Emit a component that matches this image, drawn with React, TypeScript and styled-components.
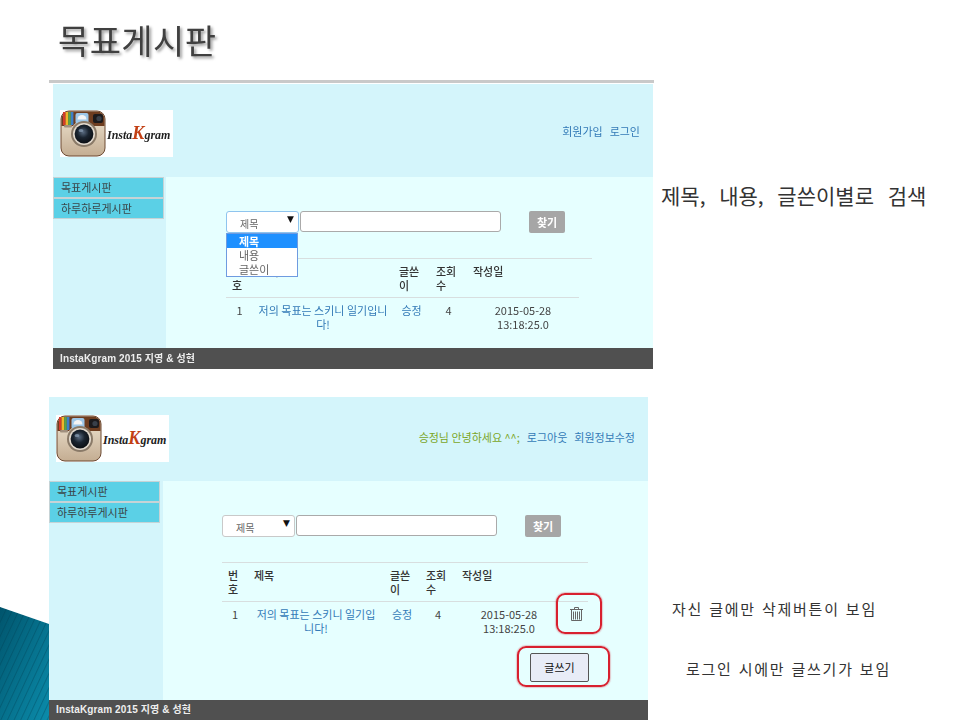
import React from "react";
import styled, { createGlobalStyle } from "styled-components";

const Global = createGlobalStyle`
  html, body { margin: 0; padding: 0; background: #fff; }
  body { width: 960px; height: 720px; overflow: hidden; font-family: "Noto Sans CJK KR", "Liberation Sans", sans-serif; }
`;

const Slide = styled.div`
  position: relative;
  width: 960px;
  height: 720px;
  overflow: hidden;
  background: #fff;
  display: flex;
  flex-direction: column;
`;
const Corner = styled.svg`
  position: absolute;
  left: 0;
  bottom: 0;
`;
const TitleBar = styled.h1`
  margin: 0;
  height: 80px;
  box-sizing: border-box;
  padding: 15px 0 0 58px;
  font-size: 34px;
  letter-spacing: 0.4px;
  line-height: 50px;
  font-weight: 400;
  color: #404040;
  text-shadow: 2px 2px 3px rgba(0, 0, 0, 0.4);
  filter: blur(0.3px);
`;
const Rule = styled.div`
  height: 3px;
  width: 605px;
  margin-left: 49px;
  background: #c9c9c9;
  flex: none;
`;
const Row = styled.section<{ $left: number; $top: number }>`
  display: flex;
  margin: ${(p) => p.$top}px 0 0 ${(p) => p.$left}px;
  position: relative;
`;
const Panel = styled.div<{ $h: number; $w: number; $soft?: boolean }>`
  width: ${(p) => p.$w}px;
  height: ${(p) => p.$h}px;
  flex: none;
  display: flex;
  flex-direction: column;
  background: #d4f5fb;
  font-size: 11px;
  line-height: 14px;
  ${(p) => (p.$soft ? "filter: blur(0.35px);" : "")}
`;
const Header = styled.header<{ $h: number; $top: number; $pad: number; $navTop: number }>`
  height: ${(p) => p.$h}px;
  flex: none;
  box-sizing: border-box;
  display: flex;
  justify-content: space-between;
  align-items: flex-start;
  padding: ${(p) => p.$top}px 13px 0 ${(p) => p.$pad}px;
  & > nav { margin-top: ${(p) => p.$navTop}px; }
`;
const LogoBox = styled.div`
  width: 113px;
  height: 47px;
  background: #fff;
  display: flex;
  align-items: center;
  gap: 1px;
  overflow: hidden;
`;
const LogoWord = styled.span`
  font-family: "Liberation Serif", serif;
  font-style: italic;
  font-weight: 700;
  font-size: 12px;
  letter-spacing: 0;
  color: #222;
  white-space: nowrap;
  & > b { color: #c23f14; font-size: 18px; font-weight: 700; }
`;
const Nav = styled.nav`
  display: flex;
  gap: 7px;
  white-space: nowrap;
`;
const NavLink = styled.a`
  color: #337ab7;
  text-decoration: none;
`;
const Greeting = styled.span`
  color: #7ba51f;
`;
const Body = styled.div`
  flex: 1;
  display: flex;
  min-height: 0;
`;
const Side = styled.aside<{ $w: number }>`
  width: ${(p) => p.$w}px;
  flex: none;
`;
const MenuItem = styled.div`
  width: 111px;
  height: 21px;
  box-sizing: border-box;
  border: 1px solid #c6d3d6;
  background: #5bd0e6;
  color: #3a4548;
  padding-left: 7px;
  line-height: 19px;
`;
const Main = styled.main<{ $pad: number }>`
  flex: 1;
  background: #e6ffff;
  padding: 34px 0 0 ${(p) => p.$pad}px;
  min-width: 0;
`;
const Search = styled.div`
  display: flex;
  align-items: flex-start;
  height: 22px;
`;
const SelectWrap = styled.div`
  position: relative;
  width: 73px;
  flex: none;
  margin-right: 1px;
`;
const SelectBox = styled.div<{ $focus?: boolean }>`
  height: 22px;
  box-sizing: border-box;
  background: #fff;
  border: 1px solid ${(p) => (p.$focus ? "#8fc4ee" : "#c9c9c9")};
  border-radius: 3px;
  color: #666;
  padding: 5px 0 0 13px;
  line-height: 14px;
  display: flex;
  justify-content: space-between;
  font-size: 10px;
`;
const Arrow = styled.span`
  font-family: "DejaVu Sans", sans-serif;
  font-size: 9px;
  line-height: 9px;
  color: #111;
  margin: -2px 4px 0 0;
`;
const DropList = styled.div`
  position: absolute;
  left: 0;
  top: 22px;
  width: 72px;
  box-sizing: border-box;
  height: 44px;
  border: 1px solid #6f9be0;
  background: #fff;
  color: #666;
  z-index: 2;
`;
const DropItem = styled.div<{ $on?: boolean }>`
  height: 14px;
  line-height: 14px;
  padding-left: 12px;
  font-weight: ${(p) => (p.$on ? 700 : 400)};
  background: ${(p) => (p.$on ? "#1e90ff" : "transparent")};
  color: ${(p) => (p.$on ? "#fff" : "#666")};
`;
const TextInput = styled.div`
  width: 201px;
  height: 21px;
  box-sizing: border-box;
  flex: none;
  background: #fff;
  border: 1px solid #aaa;
  border-radius: 3px;
`;
const FindButton = styled.button`
  width: 36px;
  height: 22px;
  flex: none;
  margin-left: 28px;
  padding: 0;
  border: 0;
  border-radius: 2px;
  background: #a6a6a6;
  color: #fff;
  font: 700 11px/22px "Noto Sans CJK KR", sans-serif;
`;
const TableWrap = styled.div`
  width: 366px;
  margin-top: 25px;
  border-top: 1px solid #d8dedf;
`;
const Table = styled.table<{ $w: number }>`
  width: ${(p) => p.$w}px;
  table-layout: fixed;
  border-collapse: collapse;
`;
const Th = styled.th`
  padding: 5px 6px;
  text-align: left;
  vertical-align: top;
  font-weight: 500;
  color: #333;
  border-bottom: 1px solid #d8dedf;
`;
const Td = styled.td`
  padding: 5px 6px;
  text-align: center;
  vertical-align: top;
  color: #444;
`;
const TitleTd = styled(Td)<{ $pad: number }>`
  padding: 5px ${(p) => p.$pad}px;
`;
const DateTd = styled(Td)`
  padding: 5px 0;
`;
const TitleLink = styled.a`
  color: #337ab7;
  text-decoration: none;
`;
const IconTd = styled.td`
  padding: 5px 0 0 8px;
  vertical-align: top;
`;
const Marked = styled.div`
  position: relative;
`;
const RedMark = styled.div<{ $x: number; $y: number; $w: number; $h: number }>`
  position: absolute;
  left: ${(p) => p.$x}px;
  top: ${(p) => p.$y}px;
  width: ${(p) => p.$w}px;
  height: ${(p) => p.$h}px;
  box-sizing: border-box;
  border: 2px solid #d8202f;
  border-radius: 9px;
  box-shadow: 0 0 1px 1px rgba(216, 32, 47, 0.25);
  pointer-events: none;
`;
const WriteRow = styled.div`
  width: 367px;
  display: flex;
  justify-content: flex-end;
  margin-top: 13px;
`;
const WriteButton = styled.button`
  display: block;
  width: 59px;
  height: 29px;
  padding: 0;
  border: 1px solid #555;
  border-radius: 2px;
  background: #e8ecf7;
  color: #111;
  font: 400 11px/27px "Noto Sans CJK KR", sans-serif;
`;
const Footer = styled.footer<{ $h: number }>`
  height: ${(p) => p.$h}px;
  flex: none;
  box-sizing: border-box;
  background: #505050;
  color: #eee;
  font-weight: 700;
  font-size: 10px;
  letter-spacing: 0.12px;
  padding-left: 7px;
  line-height: ${(p) => p.$h}px;
  font-family: "Liberation Sans", "Noto Sans CJK KR", sans-serif;
`;
const Notes = styled.div`
  display: flex;
  flex-direction: column;
`;
const Note = styled.p<{ $left: number; $top: number; $size: number; $ls: number; $ws: number }>`
  margin: ${(p) => p.$top}px 0 0 ${(p) => p.$left}px;
  font-size: ${(p) => p.$size}px;
  line-height: 22px;
  letter-spacing: ${(p) => p.$ls}px;
  word-spacing: ${(p) => p.$ws}px;
  color: #333;
  white-space: nowrap;
`;

const CameraIcon = () => (
  <svg width="46" height="47" viewBox="0 0 46 47">
    <defs>
      <linearGradient id="camBody" x1="0" y1="0" x2="0" y2="1">
        <stop offset="0" stopColor="#f0e6d4" />
        <stop offset="1" stopColor="#c4ad92" />
      </linearGradient>
      <radialGradient id="camLens" cx="0.45" cy="0.4" r="0.6">
        <stop offset="0" stopColor="#5a6c82" />
        <stop offset="0.5" stopColor="#1a2430" />
        <stop offset="1" stopColor="#0c0f14" />
      </radialGradient>
    </defs>
    <rect x="1" y="1" width="44" height="45" rx="8" fill="url(#camBody)" stroke="#6d4a33" strokeWidth="1" />
    <path d="M1.5 16V9a7.5 7.5 0 0 1 7.5-7.5h28A7.5 7.5 0 0 1 44.5 9v7H33a12 12 0 0 0-20 0Z" fill="#6e3d20" />
    <rect x="3" y="2" width="2.6" height="13" fill="#d33c2b" />
    <rect x="5.6" y="2" width="2.6" height="13" fill="#efb52a" />
    <rect x="8.2" y="2" width="2.6" height="13" fill="#5aa347" />
    <rect x="10.8" y="2" width="2.6" height="13" fill="#3c7fc8" />
    <rect x="15.5" y="3" width="13" height="11" rx="2" fill="#9dc7e8" />
    <path d="M22 5a4.5 4.5 0 0 1 4.5 4.5h-9A4.5 4.5 0 0 1 22 5Z" fill="#f4f4f4" />
    <rect x="33" y="4" width="10" height="9" rx="2" fill="#1c1a1c" />
    <circle cx="39" cy="8.5" r="2.6" fill="#39404a" />
    <circle cx="24" cy="24" r="13" fill="#8a7a68" />
    <circle cx="24" cy="24" r="11" fill="#e3dace" />
    <circle cx="24" cy="24" r="9.4" fill="url(#camLens)" />
    <ellipse cx="21" cy="20.5" rx="2.4" ry="1.6" fill="#8fa4bb" opacity="0.7" />
    <rect x="4" y="15" width="8" height="2.4" rx="1" fill="#a08f7e" />
  </svg>
);

const TrashIcon = () => (
  <svg width="13" height="14" viewBox="0 0 13 14" fill="none" stroke="#666" strokeWidth="1">
    <path d="M0 2.5h13M4.5 2.5V.5h4v2" />
    <path d="M1.5 2.5v11h10v-11" />
    <path d="M3.5 4.5v8M5.5 4.5v8M7.5 4.5v8M9.5 4.5v8" />
  </svg>
);

const Logo = () => (
  <LogoBox>
    <CameraIcon />
    <LogoWord>
      Insta<b>K</b>gram
    </LogoWord>
  </LogoBox>
);

const Menu = ({ w }: { w: number }) => (
  <Side $w={w}>
    <MenuItem>목표게시판</MenuItem>
    <MenuItem>하루하루게시판</MenuItem>
  </Side>
);

const SearchBar = ({ open }: { open?: boolean }) => (
  <Search>
    <SelectWrap>
      <SelectBox $focus={open}>
        제목
        <Arrow>▼</Arrow>
      </SelectBox>
      {open && (
        <DropList>
          <DropItem $on>제목</DropItem>
          <DropItem>내용</DropItem>
          <DropItem>글쓴이</DropItem>
        </DropList>
      )}
    </SelectWrap>
    <TextInput />
    <FindButton>찾기</FindButton>
  </Search>
);

const PostTable = ({ widths, titlePad, canDelete }: { widths: number[]; titlePad: number; canDelete?: boolean }) => (
  <TableWrap>
    <Table $w={widths.reduce((a, b) => a + b, 0)}>
      <colgroup>
        {widths.map((w, i) => (
          <col key={i} width={w} />
        ))}
      </colgroup>
      <thead>
        <tr>
          <Th>번호</Th>
          <Th>제목</Th>
          <Th>글쓴이</Th>
          <Th>조회수</Th>
          <Th>작성일</Th>
          {canDelete && <Th />}
        </tr>
      </thead>
      <tbody>
        <tr>
          <Td>1</Td>
          <TitleTd $pad={titlePad}>
            <TitleLink>저의 목표는 스키니 일기입니다!</TitleLink>
          </TitleTd>
          <Td>
            <TitleLink>승정</TitleLink>
          </Td>
          <Td>4</Td>
          <DateTd>
            2015-05-28
            <br />
            13:18:25.0
          </DateTd>
          {canDelete && (
            <IconTd>
              <Marked>
                <TrashIcon />
                <RedMark $x={-14} $y={-14} $w={46} $h={41} />
              </Marked>
            </IconTd>
          )}
        </tr>
      </tbody>
    </Table>
  </TableWrap>
);

export default function App() {
  return (
    <Slide>
      <Global />
      <Corner width="49" height="113" viewBox="0 0 49 113">
        <defs>
          <linearGradient id="cornerFill" x1="0" y1="0" x2="1" y2="1">
            <stop offset="0" stopColor="#00546c" />
            <stop offset="1" stopColor="#0b8cab" />
          </linearGradient>
          <pattern id="cornerLines" width="6" height="6" patternUnits="userSpaceOnUse" patternTransform="rotate(25)">
            <rect width="1" height="6" fill="#003f52" opacity="0.35" />
          </pattern>
        </defs>
        <polygon points="0,0 49,17 49,113 0,113" fill="url(#cornerFill)" />
        <polygon points="0,0 49,17 49,113 0,113" fill="url(#cornerLines)" />
      </Corner>
      <TitleBar>목표게시판</TitleBar>
      <Rule />
      <Row $left={53} $top={1}>
        <Panel $w={600} $h={285} $soft>
          <Header $h={93} $top={26} $pad={7} $navTop={14}>
            <Logo />
            <Nav>
              <NavLink>회원가입</NavLink>
              <NavLink>로그인</NavLink>
            </Nav>
          </Header>
          <Body>
            <Menu w={113} />
            <Main $pad={60}>
              <SearchBar open />
              <PostTable widths={[27, 140, 37, 37, 112]} titlePad={4} />
            </Main>
          </Body>
          <Footer $h={21}>InstaKgram 2015 지영 &amp; 성현</Footer>
        </Panel>
        <Note $left={8} $top={100} $size={21} $ls={0} $ws={9}>
          제목, 내용, 글쓴이별로 검색
        </Note>
      </Row>
      <Row $left={49} $top={28}>
        <Panel $w={599} $h={323}>
          <Header $h={84} $top={18} $pad={7} $navTop={15}>
            <Logo />
            <Nav>
              <Greeting>승정님 안녕하세요 ^^;</Greeting>
              <NavLink>로그아웃</NavLink>
              <NavLink>회원정보수정</NavLink>
            </Nav>
          </Header>
          <Body>
            <Menu w={114} />
            <Main $pad={59}>
              <SearchBar />
              <PostTable widths={[26, 136, 36, 36, 106, 26]} titlePad={6} canDelete />
              <WriteRow>
                <Marked>
                  <WriteButton>글쓰기</WriteButton>
                  <RedMark $x={-13} $y={-7} $w={93} $h={41} />
                </Marked>
              </WriteRow>
            </Main>
          </Body>
          <Footer $h={20}>InstaKgram 2015 지영 &amp; 성현</Footer>
        </Panel>
        <Notes>
          <Note $left={24} $top={201} $size={15} $ls={1.75} $ws={1}>
            자신 글에만 삭제버튼이 보임
          </Note>
          <Note $left={38} $top={38} $size={15} $ls={1.75} $ws={1}>
            로그인 시에만 글쓰기가 보임
          </Note>
        </Notes>
      </Row>
    </Slide>
  );
}
